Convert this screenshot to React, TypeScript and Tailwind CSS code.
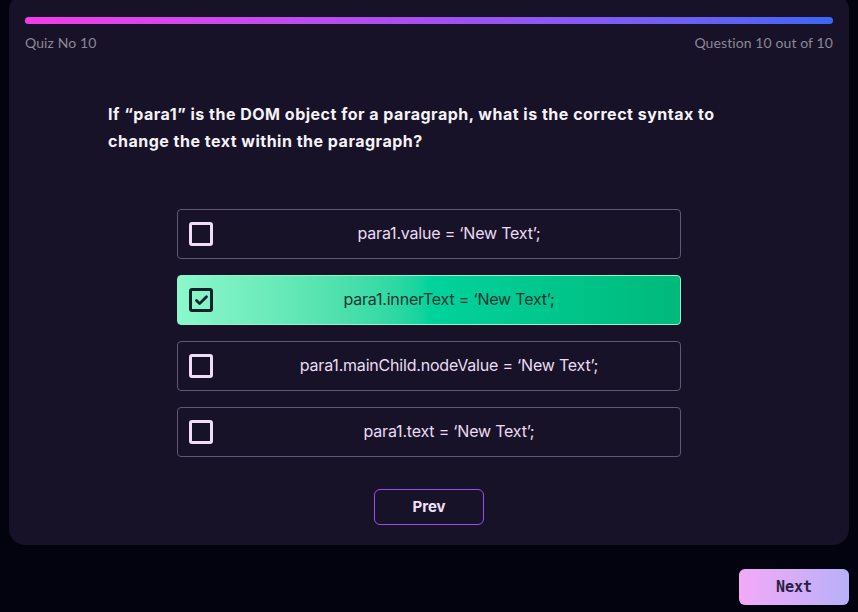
import { Check } from "lucide-react";

const options: string[] = [
  "para1.value = ‘New Text’;",
  "para1.innerText = ‘New Text’;",
  "para1.mainChild.nodeValue = ‘New Text’;",
  "para1.text = ‘New Text’;",
];

const selected = 1;

export default function App() {
  return (
    <div className="min-h-screen w-full bg-[#03030f] px-[9px] font-['Inter',sans-serif] overflow-hidden">
      {/* Quiz card */}
      <div className="-mt-1.5 bg-[#181228] rounded-2xl px-4 pt-[23px] pb-5">
        <div className="h-[7px] rounded-full bg-gradient-to-r from-[#f23ce9] via-[#a64ef2] to-[#3c65f6]" />

        <div className="flex items-center justify-between mt-[9px] text-[14px] leading-5 text-[#8c8796] font-['Lato',sans-serif] tracking-[0.1px]">
          <span>Quiz No 10</span>
          <span>Question 10 out of 10</span>
        </div>

        <h2 className="mt-[48px] pl-[83px] pr-[100px] text-[16px] leading-[27px] font-bold tracking-[0.5px] text-[#f5f2f8]">
          If “para1” is the DOM object for a paragraph, what is the correct syntax to change the text within the paragraph?
        </h2>

        <div className="mt-[54px] mx-auto w-[504px] flex flex-col gap-4">
          {options.map((opt: string, i: number) => {
            const active = i === selected;
            return (
              <div
                key={opt}
                className={
                  active
                    ? "relative h-[50px] pl-10 pb-[3px] rounded-[4px] flex items-center justify-center bg-gradient-to-r from-[#8cf8cc] via-[#00d39c] to-[#00b97b] border border-[#8ff5cf]"
                    : "relative h-[50px] pl-10 pb-[3px] rounded-[4px] flex items-center justify-center border border-[#5f5874]"
                }
              >
                <div
                  className={
                    active
                      ? "absolute left-[11px] top-[12px] w-6 h-6 rounded-[3px] border-[3px] border-[#14202a] flex items-center justify-center"
                      : "absolute left-[11px] top-[12px] w-6 h-6 rounded-[3px] border-[3px] border-[#f1ddf8]"
                  }
                >
                  {active && <Check size={15} strokeWidth={4.5} className="text-[#14202a]" />}
                </div>
                <span
                  className={
                    active
                      ? "text-[16px] text-[#173530] tracking-[-0.2px]"
                      : "text-[16px] text-[#e9dcf3] tracking-[-0.2px]"
                  }
                >
                  {opt}
                </span>
              </div>
            );
          })}
        </div>

        <div className="flex justify-center mt-8">
          <button className="w-[110px] h-9 rounded-md border border-[#9a4ef0] text-[15px] font-bold text-[#f0e0f8]">
            Prev
          </button>
        </div>
      </div>

      <div className="flex justify-end mt-6">
        <button className="w-[110px] h-9 rounded-md bg-gradient-to-r from-[#f3a9f8] to-[#b7b0f9] text-[15px] font-bold text-[#2a2040] font-['DejaVu_Sans_Mono',monospace]">
          Next
        </button>
      </div>
    </div>
  );
}
